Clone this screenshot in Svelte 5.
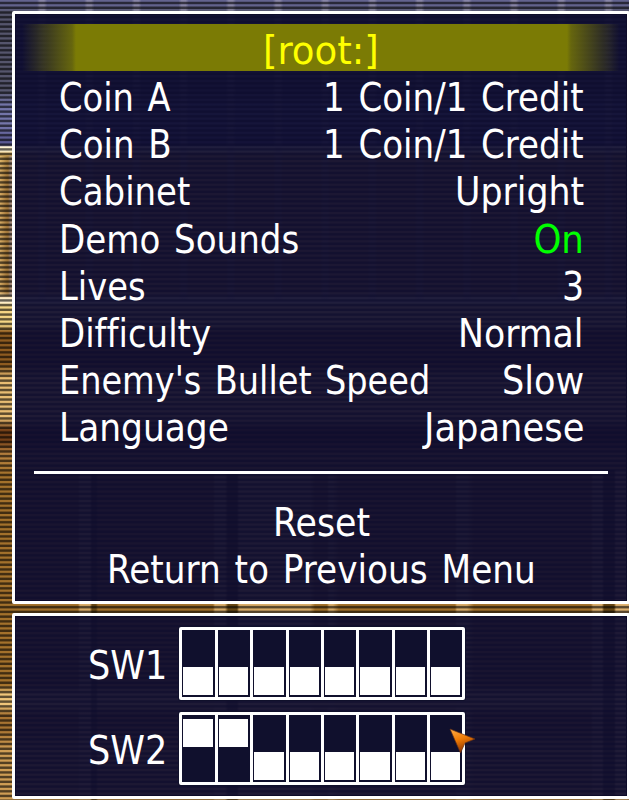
<script>
  const rows = [
    { name: 'Coin A', nw: 112, value: '1 Coin/1 Credit', vw: 261 },
    { name: 'Coin B', nw: 113, value: '1 Coin/1 Credit', vw: 261 },
    { name: 'Cabinet', nw: 131, value: 'Upright', vw: 129 },
    { name: 'Demo Sounds', nw: 240, value: 'On', vw: 51, on: true },
    { name: 'Lives', nw: 86.5, value: '3', vw: 22.5 },
    { name: 'Difficulty', nw: 152, value: 'Normal', vw: 126 },
    { name: "Enemy's Bullet Speed", nw: 371, value: 'Slow', vw: 82 },
    { name: 'Language', nw: 169.5, value: 'Japanese', vw: 160 }
  ];
  const switches = [
    { name: 'SW1', w: 79, up: [0, 0, 0, 0, 0, 0, 0, 0] },
    { name: 'SW2', w: 79, up: [1, 1, 0, 0, 0, 0, 0, 0] }
  ];
  // Condense a label horizontally so that it fills its own column.
  function fit(node, width) {
    node.style.transform = `scaleX(${width / node.offsetWidth})`;
  }
</script>

{#snippet label(text, w)}
  <span class="slot" style="width:{w}px"><span class="text" use:fit={w}>{text}</span></span>
{/snippet}

<div class="screen">
  <section class="panel menu">
    <h1>{@render label('[root:]', 116)}</h1>
    {#each rows as r}
      <div class="row">
        {@render label(r.name, r.nw)}
        <div class:on={r.on} class="value">{@render label(r.value, r.vw)}</div>
      </div>
    {/each}
    <div class="divider"></div>
    <div class="action">{@render label('Reset', 97)}</div>
    <div class="action">{@render label('Return to Previous Menu', 429)}</div>
  </section>
  <section class="panel dips">
    {#each switches as s}
      <div class="dip">
        {@render label(s.name, s.w)}
        <div class="bank">
          {#each s.up as u}
            <div class="cell"><i class:up={u}></i></div>
          {/each}
        </div>
      </div>
    {/each}
  </section>
  <svg class="cursor" width="28" height="28" viewBox="0 0 28 28">
    <defs><linearGradient id="orange" x1="0" y1="0" x2=".35" y2="1"><stop offset="0" stop-color="#ffad48"/><stop offset=".5" stop-color="#ef7b05"/><stop offset="1" stop-color="#8d3300"/></linearGradient></defs>
    <path d="M1 1 26 11 16 15 11.5 25Z" fill="url(#orange)" stroke="#653015" stroke-width=".7"/>
  </svg>
</div>

<style>
  :global(body) { margin: 0; overflow: hidden; }
  .screen {
    position: relative; width: 629px; height: 800px; overflow: hidden; box-sizing: border-box;
    padding: 11px 0 0 12.4px; display: flex; flex-direction: column; gap: 9px;
    font-family: "DejaVu Sans Condensed", "DejaVu Sans", sans-serif; font-stretch: condensed;
    font-size: 39.5px; font-variant-ligatures: none; word-spacing: 3px; color: #fff;
    background:
      repeating-linear-gradient(180deg, #0000 0 1.2px, #0009 2.4px 3.8px, #0000 4.72px),
      linear-gradient(90deg, #ffe09a44 0, #3a200033 6px, #3a200044 8px, #8080b088 11px, #8080b000 13px) 0 156px / 13px 140px no-repeat,
      linear-gradient(90deg, #0000 78px, #f3c887aa 80px 90px, #3208 92px 96px, #0000 98px 213px, #f3c887aa 215px 225px, #3208 228px 237px, #f3c887aa 239px 310px, #0000 315px 327px, #f3c887aa 329px 333px, #0000 339px 455px, #f3c887aa 457px 467px, #0000 474px 591px, #f3c887aa 593px 602px, #3208 604px 614px, #ffd395aa 616px) 0 470px / 100% 330px no-repeat,
      repeating-linear-gradient(90deg, #0000 0 37px, #c5bdd060 40px 44px, #0000 47.2px) 0 0 / 100% 300px no-repeat,
      linear-gradient(180deg, #63638f 0 5px, #55556c 12px 90px, #7475aa 105px 125px, #5a5992 140px 145px, #fff3cf 147px 151px, #d6aa5b 154px, #c5954e 175px 292px, #fff1d0 299px 302px, #f5d684 306px 325px, #8e5b20 332px 365px, #e8bd72 378px 418px, #744018 430px 440px, #b98340 455px, #a3712b 475px 685px, #f0c67a 694px 705px, #a77331 715px 730px, #cf9d54 750px 800px);
  }
  .panel {
    width: 618px; box-sizing: border-box; border: 3px solid #fff; border-radius: 2px;
    background: #0e0d31ec; background-clip: padding-box; box-shadow: inset 0 0 0 1px #0d0b2a; flex: none;
  }
  .menu { height: 593px; padding-top: 10px; display: flex; flex-direction: column; }
  h1 {
    margin: 0 8px 0 7px; height: 47px; width: 598px; flex: none; display: flex; justify-content: center;
    font-size: inherit; font-weight: 400; color: #ff0;
    background: linear-gradient(90deg, #7b7b0500, #7b7b05cc 50px, #7b7b05 54px 545px, #7b7b05cc 549px, #7b7b0500 598px);
  }
  .row, .action { height: 47.2px; flex: none; display: flex; }
  .row { margin-left: 43.5px; width: 525.5px; justify-content: space-between; }
  .action { width: 612px; justify-content: center; }
  .slot { display: block; flex: none; height: 47px; }
  .text { display: inline-block; white-space: nowrap; line-height: 52px; transform-origin: 0 50%; }
  .action .text { line-height: 50px; }
  .dip .text { line-height: 50px; }
  .on { color: #0f0; }
  .divider { height: 3px; width: 574px; margin: 22px 0 23.4px 19px; background: #fff; flex: none; }
  .dips { height: 186px; padding: 11px 0 0 73px; display: flex; flex-direction: column; gap: 12px; }
  .dip { display: flex; align-items: center; gap: 12px; height: 73px; flex: none; }
  .bank {
    width: 286px; height: 73px; box-sizing: border-box; border: 3px solid #fff; border-radius: 2px;
    display: flex; gap: 3px; background: #fff; box-shadow: 0 0 0 1px #10102b;
  }
  .cell { flex: 1; background: #10102d; display: flex; align-items: flex-end; padding: 4px 2px 2px 1px; }
  .cell i { width: 100%; height: 28px; background: #fff; }
  .cell .up { align-self: flex-start; }
  .cursor { position: absolute; left: 449px; top: 728px; }
</style>
